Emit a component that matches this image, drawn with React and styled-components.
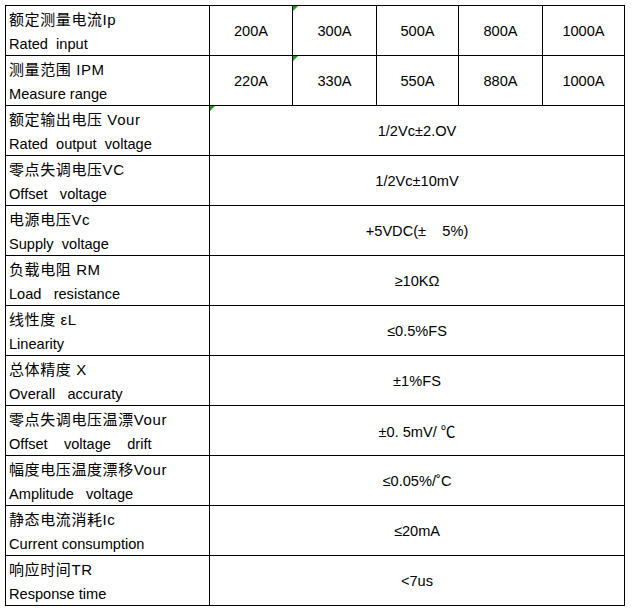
import React from "react";
import styled, { createGlobalStyle } from "styled-components";

const GlobalStyle = createGlobalStyle`
  html, body {
    margin: 0;
    padding: 0;
    background: #ffffff;
  }
`;

const Page = styled.div`
  padding: 5px 0 0 5px;
  font-family: "Liberation Sans", Arial, "Noto Sans CJK SC", sans-serif;
  font-size: 14.6px;
  color: #000;
`;

// black background + 1px gaps draw the grid lines
const Sheet = styled.div`
  display: grid;
  grid-template-columns: 203px 82px 83px 81px 83px 81px;
  grid-auto-rows: 49px;
  gap: 1px;
  padding: 1px;
  width: max-content;
  background: #000;
`;

const LabelCell = styled.div`
  background: #fff;
  padding-left: 3px;
  white-space: pre;
`;

const Zh = styled.div`
  height: 26px;
  line-height: 27px;
  font-size: 15px;
  letter-spacing: 0.6px;
`;

const En = styled.div`
  height: 23px;
  line-height: 24px;
`;

const ValueCell = styled.div`
  position: relative;
  grid-column: ${(p) => (p.$wide ? "span 5" : "auto")};
  display: flex;
  align-items: center;
  justify-content: center;
  background: #fff;
  white-space: pre;
`;

const Marker = styled.span`
  position: absolute;
  top: 0;
  left: 0;
  width: 0;
  height: 0;
  border-top: 5px solid #1f9a1f;
  border-right: 5px solid transparent;
`;

const ranges = [
  { zh: "额定测量电流Ip", en: "Rated  input", values: ["200A", "300A", "500A", "800A", "1000A"], marks: [1] },
  { zh: "测量范围 IPM", en: "Measure range", values: ["220A", "330A", "550A", "880A", "1000A"], marks: [1] },
];

const specs = [
  { zh: "额定输出电压 Vour", en: "Rated  output  voltage", value: "1/2Vc±2.OV", mark: true },
  { zh: "零点失调电压VC", en: "Offset   voltage", value: "1/2Vc±10mV" },
  { zh: "电源电压Vc", en: "Supply  voltage", value: "+5VDC(±    5%)" },
  { zh: "负载电阻 RM", en: "Load   resistance", value: "≥10KΩ" },
  { zh: "线性度 εL", en: "Linearity", value: "≤0.5%FS" },
  { zh: "总体精度 X", en: "Overall   accuraty", value: "±1%FS" },
  { zh: "零点失调电压温漂Vour", en: "Offset    voltage    drift", value: "±0. 5mV/ ℃" },
  { zh: "幅度电压温度漂移Vour", en: "Amplitude   voltage", value: "≤0.05%/˚C" },
  { zh: "静态电流消耗Ic", en: "Current consumption", value: "≤20mA" },
  { zh: "响应时间TR", en: "Response time", value: "<7us" },
];

function Label({ zh, en }) {
  return (
    <LabelCell>
      <Zh>{zh}</Zh>
      <En>{en}</En>
    </LabelCell>
  );
}

export default function App() {
  return (
    <Page>
      <GlobalStyle />
      <Sheet>
        {ranges.map((r) => (
          <React.Fragment key={r.en}>
            <Label zh={r.zh} en={r.en} />
            {r.values.map((v, i) => (
              <ValueCell key={i}>
                {r.marks.includes(i) && <Marker />}
                {v}
              </ValueCell>
            ))}
          </React.Fragment>
        ))}
        {specs.map((s) => (
          <React.Fragment key={s.en}>
            <Label zh={s.zh} en={s.en} />
            <ValueCell $wide>
              {s.mark && <Marker />}
              {s.value}
            </ValueCell>
          </React.Fragment>
        ))}
      </Sheet>
    </Page>
  );
}
